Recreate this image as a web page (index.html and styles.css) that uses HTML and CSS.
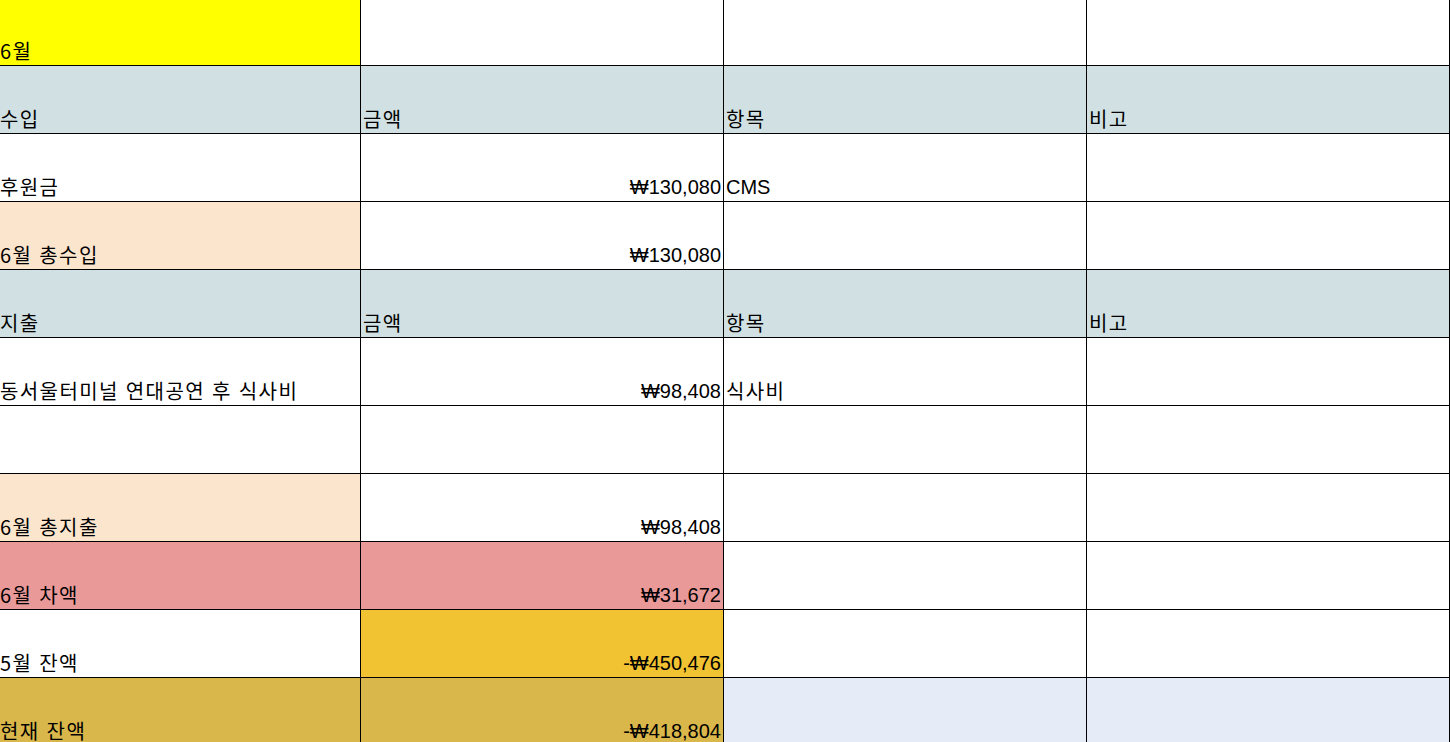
FILE: index.html
```html
<!DOCTYPE html>
<html lang="ko">
<head>
    <meta charset="UTF-8">
    <meta name="viewport" content="width=device-width, initial-scale=1.0">
    <title>6월 회계</title>
    <link rel="stylesheet" href="styles.css">
</head>
<body>
    <table class="sheet">
        <colgroup>
            <col class="col-a">
            <col class="col-b">
            <col class="col-c">
            <col class="col-d">
        </colgroup>
        <tr>
            <td class="month ko">6월</td>
            <td></td>
            <td></td>
            <td></td>
        </tr>
        <tr class="head">
            <td class="ko">수입</td>
            <td class="ko">금액</td>
            <td class="ko">항목</td>
            <td class="ko">비고</td>
        </tr>
        <tr>
            <td class="ko">후원금</td>
            <td class="num">₩130,080</td>
            <td>CMS</td>
            <td></td>
        </tr>
        <tr>
            <td class="total ko">6월 총수입</td>
            <td class="num">₩130,080</td>
            <td></td>
            <td></td>
        </tr>
        <tr class="head">
            <td class="ko">지출</td>
            <td class="ko">금액</td>
            <td class="ko">항목</td>
            <td class="ko">비고</td>
        </tr>
        <tr>
            <td class="ko">동서울터미널 연대공연 후 식사비</td>
            <td class="num">₩98,408</td>
            <td class="ko">식사비</td>
            <td></td>
        </tr>
        <tr>
            <td></td>
            <td></td>
            <td></td>
            <td></td>
        </tr>
        <tr>
            <td class="total ko">6월 총지출</td>
            <td class="num">₩98,408</td>
            <td></td>
            <td></td>
        </tr>
        <tr>
            <td class="diff ko">6월 차액</td>
            <td class="diff num">₩31,672</td>
            <td></td>
            <td></td>
        </tr>
        <tr>
            <td class="ko">5월 잔액</td>
            <td class="prev num">-₩450,476</td>
            <td></td>
            <td></td>
        </tr>
        <tr>
            <td class="now ko">현재 잔액</td>
            <td class="now num">-₩418,804</td>
            <td class="note"></td>
            <td class="note"></td>
        </tr>
    </table>
</body>
</html>
```

FILE: styles.css
```css
body {
    margin: 0;
    padding: 0;
    overflow: hidden;
    background-color: #fff;
    font-family: 'Liberation Sans', 'Noto Sans CJK KR', sans-serif;
    color: #000;
}

.sheet {
    margin-top: -2px;
    border-collapse: separate;
    border-spacing: 0;
    table-layout: fixed;
    width: 1450px;
}

.col-a { width: 361px; }
.col-b { width: 363px; }
.col-c { width: 363px; }
.col-d { width: 363px; }

.sheet td {
    box-sizing: border-box;
    height: 68px;
    padding: 0 2px 4px 2px;
    border-right: 1px solid #000;
    border-bottom: 1px solid #000;
    vertical-align: bottom;
    font-size: 20px;
    line-height: 20px;
    white-space: nowrap;
    overflow: hidden;
}

.sheet td:first-child {
    padding-left: 0;
}

.sheet .ko {
    font-family: 'Noto Sans CJK KR', sans-serif;
    font-size: 20px;
    letter-spacing: 1.4px;
}

.sheet .num {
    text-align: right;
}

.month { background-color: #ffff00; }
.head td { background-color: #d0e0e3; }
.total { background-color: #fce5cd; }
.diff { background-color: #ea9999; }
.prev { background-color: #f1c232; }
.now { background-color: #dab74b; }
.note { background-color: #e5ebf7; }
```
